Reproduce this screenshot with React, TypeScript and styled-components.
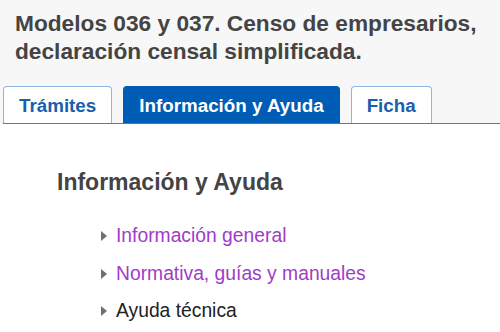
import styled, { createGlobalStyle } from "styled-components";

const Global = createGlobalStyle`
  body {
    margin: 0;
    background: #ffffff;
    font-family: "Liberation Sans", Arial, sans-serif;
  }
`;

const Header = styled.header`
  background: #f7f7f7;
  padding: 9px 0 0 3px;
`;

const Title = styled.h1`
  margin: 0 0 21px 12px;
  font-size: 22.7px;
  line-height: 28px;
  font-weight: 700;
  color: #444444;
`;

const Tabs = styled.nav`
  display: flex;
  gap: 11px;
  align-items: flex-end;
  border-bottom: 1px solid #3a7fca;
`;

const Tab = styled.a<{ $active?: boolean }>`
  display: block;
  height: 37px;
  line-height: 38px;
  padding: 0 15px;
  box-sizing: border-box;
  font-size: 18.8px;
  font-weight: 700;
  text-decoration: none;
  border-radius: 4px 4px 0 0;
  background: ${({ $active }) => ($active ? "#005db5" : "#ffffff")};
  color: ${({ $active }) => ($active ? "#ffffff" : "#1a5eae")};
  border: 1px solid ${({ $active }) => ($active ? "#005db5" : "#8db5e2")};
  border-bottom: none;
`;

const Content = styled.main`
  padding: 44px 0 0 57px;
`;

const Heading = styled.h2`
  margin: 0 0 29px;
  font-size: 23px;
  line-height: 28px;
  font-weight: 700;
  color: #444444;
`;

const List = styled.ul`
  list-style: none;
  margin: 0;
  padding: 0 0 0 44px;
  display: flex;
  flex-direction: column;
  gap: 15.5px;
`;

const Item = styled.li`
  display: flex;
  align-items: center;
  gap: 9px;
  height: 22px;
  font-size: 19.3px;
`;

const Arrow = styled.span`
  width: 0;
  height: 0;
  border-top: 5px solid transparent;
  border-bottom: 5px solid transparent;
  border-left: 6px solid #707070;
`;

const Link = styled.a<{ $plain?: boolean }>`
  color: ${({ $plain }) => ($plain ? "#222222" : "#a03cc8")};
  text-decoration: none;
`;

const items = [
  { label: "Información general" },
  { label: "Normativa, guías y manuales" },
  { label: "Ayuda técnica", plain: true },
];

export default function App() {
  return (
    <>
      <Global />
      <Header>
        <Title>
          Modelos 036 y 037. Censo de empresarios,
          <br />
          declaración censal simplificada.
        </Title>
        <Tabs>
          <Tab href="#">Trámites</Tab>
          <Tab href="#" $active>
            Información y Ayuda
          </Tab>
          <Tab href="#">Ficha</Tab>
        </Tabs>
      </Header>
      <Content>
        <Heading>Información y Ayuda</Heading>
        <List>
          {items.map((it) => (
            <Item key={it.label}>
              <Arrow />
              <Link href="#" $plain={it.plain}>
                {it.label}
              </Link>
            </Item>
          ))}
        </List>
      </Content>
    </>
  );
}
